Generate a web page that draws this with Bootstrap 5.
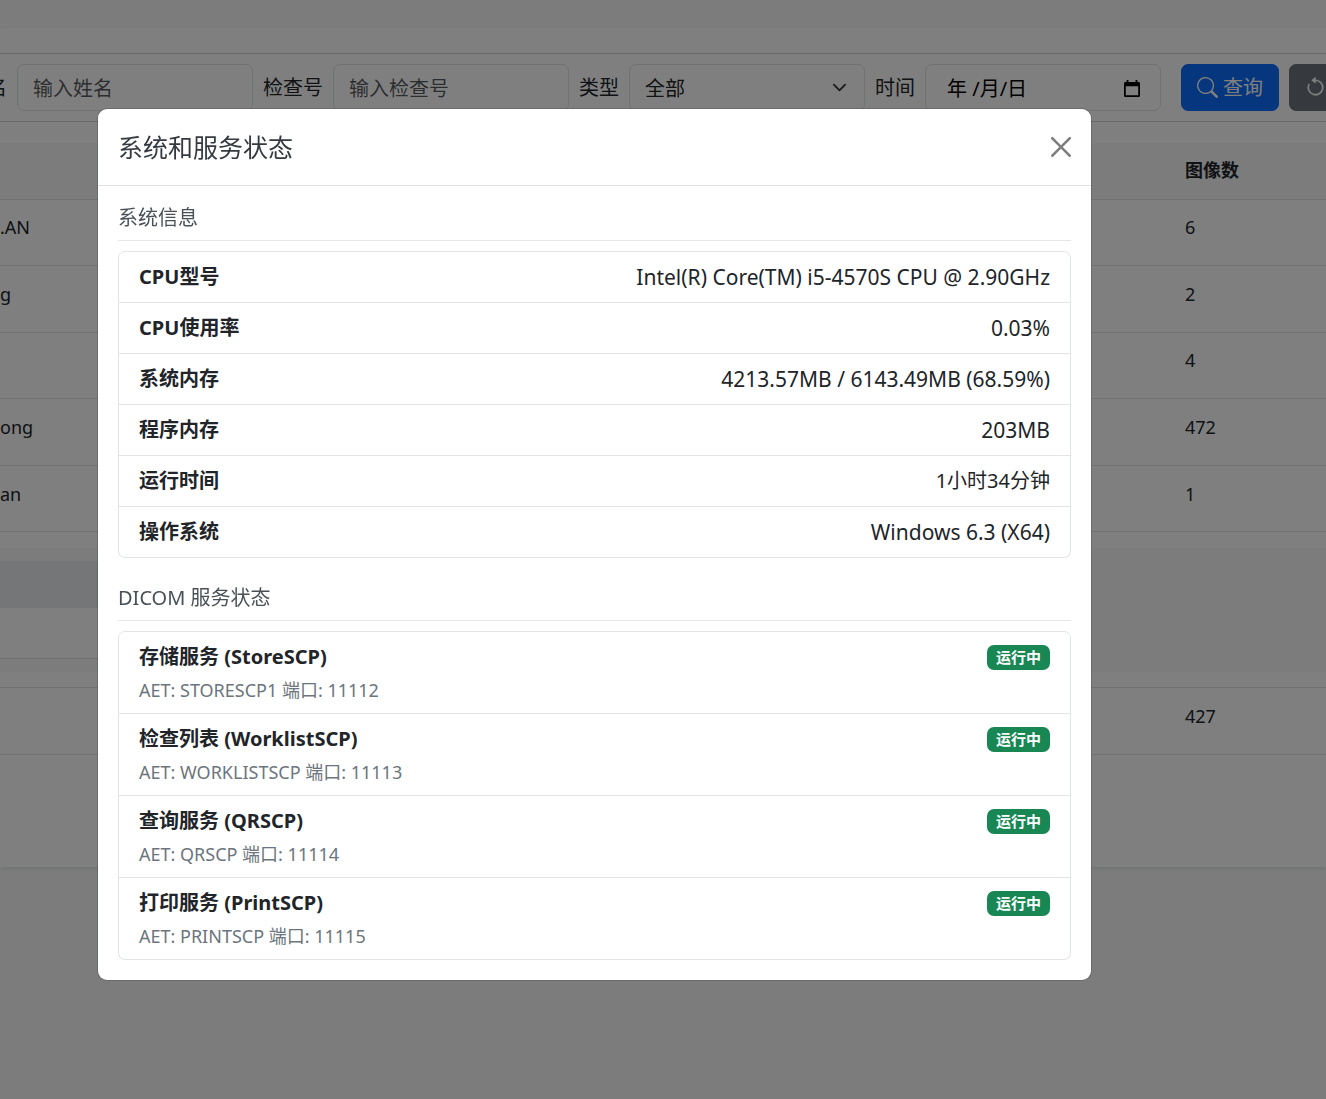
<!DOCTYPE html>
<html lang="zh-CN">
<head>
<meta charset="utf-8">
<meta name="viewport" content="width=device-width, initial-scale=1">
<title>系统和服务状态</title>
<link href="https://cdn.jsdelivr.net/npm/bootstrap@5.3.0/dist/css/bootstrap.min.css" rel="stylesheet">
<style>
  :root { font-size: 20px; }
  body {
    font-family: "Noto Sans", "Noto Sans CJK SC", sans-serif;
    font-size: 20px; line-height: 30px; background: #f8f9fa; overflow: hidden;
  }
  .page-wrap { overflow: hidden; }
  .study-card { margin-top: 28px; padding: 25px 0 112px; background: #fff; box-shadow: 0 2px 5px rgba(0,0,0,.09); }
  .filter-bar { padding: 10px 0; gap: 10px; margin-left: -13px; }
  .filter-wrap { border-top: 1px solid #d0d2d4; border-bottom: 1px solid #d0d2d4; margin-bottom: 21px; }
  .filter-bar > * { flex: none; }
  .filter-bar .form-control, .filter-bar .form-select {
    width: 236px; height: 47px; padding: 8px 15px 6px; border-radius: 7px; font-size: 20px; line-height: 30px;
  }
  .filter-bar .form-select { background-size: 19px 15px; background-position: right 15px center; }
  .filter-bar .btn { height: 47px; padding: 7px 15px; border-radius: 7px; line-height: 30px; gap: 5px; }
  .date-box input { padding: 0 0 0 6px; line-height: 30px; min-width: 0; outline: 0; }
  .study-table { height: 612px; font-size: 18px; line-height: 27px; }
  .study-table th, .study-table td { padding: 0 10px 9px 0; vertical-align: middle; }
  .study-table thead th { padding-bottom: 0; height: 56px; background: #f8f9fa; }
  .study-table th:last-child { width: 141px; }
  .study-table .detail-cell { padding: 16px 0 15px; height: 155px; }
  .detail-panel { background: #f8f9fa; padding: 13px 0; }
  .series-head { height: 47px; background: #e9ecef; }
  .series-body { height: 51px; background: #fff; border-bottom: 1px solid #dee2e6; }
  .series-list { width: 75%; }
  .status-modal .modal-dialog { margin: 109px 0 0 98px; max-width: 993px; }
  .status-modal .modal-content { border-radius: 9px; border-width: 0; box-shadow: 0 0 0 1px rgba(0,0,0,.15); }
  .status-modal .modal-header { padding: 20px; }
  .status-modal .modal-title { font-size: 25px; line-height: 36px; font-weight: 400; color: #343a40; }
  .status-modal .modal-body { padding: 20px; }
  .section-title { font-size: 20px; line-height: 24px; font-weight: 400; padding-bottom: 10px; margin-bottom: 10px; border-bottom: 1px solid #e4e7ea; color: #495057; }
  .info-list { margin-bottom: 28px; }
  .latin-value { font-size: 21px; }
  .status-modal .list-group { --bs-list-group-border-radius: 7px; }
  .status-modal .list-group-item { padding: 10px 20px; border-color: #e2e5e8; }
  .status-modal .service-note { font-size: 18px; line-height: 26px; margin-top: 5px; color: #6c757d; }
  .status-modal .badge { font-size: 15px; line-height: 15px; padding: 5px 9px; border-radius: 7px; }
</style>
</head>
<body>
<div class="page-wrap pb-5">
  <main class="study-card">
    <div class="filter-wrap">
      <form class="filter-bar d-flex align-items-center">
        <label for="patientName">名</label>
        <input id="patientName" class="form-control" type="text" placeholder="输入姓名">
        <label for="accession">检查号</label>
        <input id="accession" class="form-control" type="text" placeholder="输入检查号">
        <label for="modality">类型</label>
        <select id="modality" class="form-select"><option>全部</option></select>
        <label for="studyDate">时间</label>
        <div class="form-control date-box d-flex align-items-center me-2">
          <input id="studyDate" class="border-0 bg-transparent flex-grow-1" type="text" value="年 /月/日">
          <svg class="flex-shrink-0 me-1" width="16" height="18" viewBox="0 0 18 20" aria-hidden="true"><path fill="#000" fill-rule="evenodd" d="M3 0h2v2h8V0h2v2h1.500q1.500 0 1.500 1.500v14q0 1.500-1.500 1.500h-15Q0 19 0 17.500v-14Q0 2 1.500 2H3zM2 7v10h14V7z"/></svg>
        </div>
        <button type="submit" class="btn btn-primary d-flex align-items-center">
          <svg width="21" height="21" viewBox="0 0 16 16" fill="currentColor" aria-hidden="true"><path d="M11.742 10.344a6.500 6.500 0 1 0-1.397 1.398h-.001c.03.04.062.078.098.115l3.850 3.850a1 1 0 0 0 1.415-1.414l-3.850-3.850a1.007 1.007 0 0 0-.115-.1zM12 6.500a5.500 5.500 0 1 1-11 0 5.500 5.500 0 0 1 11 0z"/></svg>
          查询
        </button>
        <button type="reset" class="btn btn-secondary d-flex align-items-center pe-5" aria-label="重置">
          <svg width="21" height="21" viewBox="0 0 16 16" fill="currentColor" stroke="currentColor" stroke-width=".3" aria-hidden="true"><path fill-rule="evenodd" d="M8 3a5 5 0 1 1-4.546 2.914.5.5 0 0 0-.908-.417A6 6 0 1 0 8 2v1z"/><path d="M8 4.466V.534a.25.25 0 0 0-.41-.192L5.230 2.308a.25.25 0 0 0 0 .384l2.360 1.966A.25.25 0 0 0 8 4.466z"/></svg>
        </button>
      </form>
    </div>
    <table class="table study-table mb-0">
      <thead><tr><th></th><th>图像数</th></tr></thead>
      <tbody>
        <tr><td>.AN</td><td>6</td></tr>
        <tr><td>g</td><td>2</td></tr>
        <tr><td></td><td>4</td></tr>
        <tr><td>ong</td><td>472</td></tr>
        <tr><td>an</td><td>1</td></tr>
        <tr><td colspan="2" class="detail-cell">
          <div class="detail-panel"><div class="series-list"><div class="series-head"></div><div class="series-body"></div></div></div>
        </td></tr>
        <tr><td></td><td>427</td></tr>
      </tbody>
    </table>
  </main>
</div>

<div class="modal-backdrop show"></div>
<div class="modal status-modal d-block" tabindex="-1" role="dialog" aria-modal="true" aria-labelledby="statusTitle">
  <div class="modal-dialog">
    <div class="modal-content">
      <div class="modal-header">
        <h5 class="modal-title" id="statusTitle">系统和服务状态</h5>
        <button type="button" class="btn-close" data-bs-dismiss="modal" aria-label="关闭"></button>
      </div>
      <div class="modal-body">
        <h6 class="section-title">系统信息</h6>
        <ul class="list-group info-list">
          <li class="list-group-item d-flex justify-content-between"><strong>CPU型号</strong><span class="latin-value">Intel(R) Core(TM) i5-4570S CPU @ 2.90GHz</span></li>
          <li class="list-group-item d-flex justify-content-between"><strong>CPU使用率</strong><span class="latin-value">0.03%</span></li>
          <li class="list-group-item d-flex justify-content-between"><strong>系统内存</strong><span class="latin-value">4213.57MB / 6143.49MB (68.59%)</span></li>
          <li class="list-group-item d-flex justify-content-between"><strong>程序内存</strong><span class="latin-value">203MB</span></li>
          <li class="list-group-item d-flex justify-content-between"><strong>运行时间</strong><span>1小时34分钟</span></li>
          <li class="list-group-item d-flex justify-content-between"><strong>操作系统</strong><span class="latin-value">Windows 6.3 (X64)</span></li>
        </ul>
        <h6 class="section-title">DICOM 服务状态</h6>
        <ul class="list-group">
          <li class="list-group-item">
            <div class="d-flex justify-content-between align-items-center"><strong>存储服务 (StoreSCP)</strong><span class="badge text-bg-success">运行中</span></div>
            <div class="service-note">AET: STORESCP1 端口: 11112</div>
          </li>
          <li class="list-group-item">
            <div class="d-flex justify-content-between align-items-center"><strong>检查列表 (WorklistSCP)</strong><span class="badge text-bg-success">运行中</span></div>
            <div class="service-note">AET: WORKLISTSCP 端口: 11113</div>
          </li>
          <li class="list-group-item">
            <div class="d-flex justify-content-between align-items-center"><strong>查询服务 (QRSCP)</strong><span class="badge text-bg-success">运行中</span></div>
            <div class="service-note">AET: QRSCP 端口: 11114</div>
          </li>
          <li class="list-group-item">
            <div class="d-flex justify-content-between align-items-center"><strong>打印服务 (PrintSCP)</strong><span class="badge text-bg-success">运行中</span></div>
            <div class="service-note">AET: PRINTSCP 端口: 11115</div>
          </li>
        </ul>
      </div>
    </div>
  </div>
</div>
<script src="https://cdn.jsdelivr.net/npm/bootstrap@5.3.0/dist/js/bootstrap.bundle.min.js"></script>
</body>
</html>
